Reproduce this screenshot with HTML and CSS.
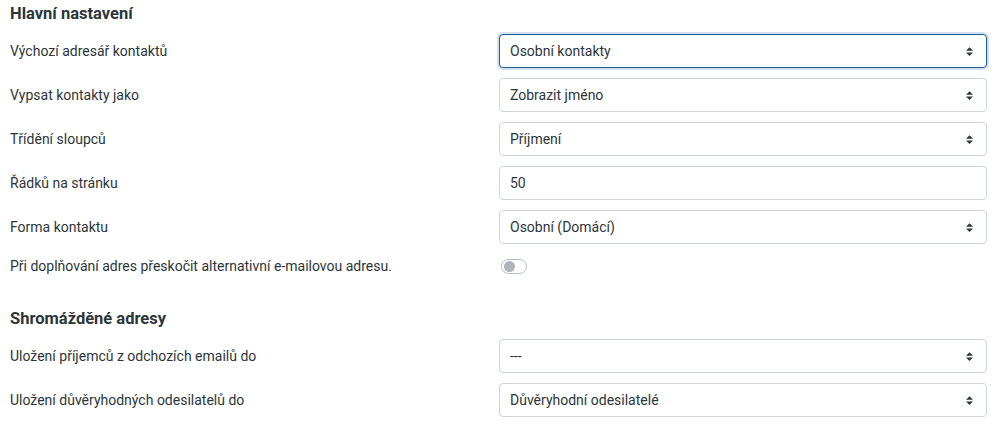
FILE: index.html
```html
<!DOCTYPE html>
<html lang="cs">
<head>
<meta charset="utf-8">
<title>Nastavení kontaktů</title>
<link rel="stylesheet" href="styles.css">
</head>
<body>
<div class="page">
  <section class="group">
    <h2 class="legend">Hlavní nastavení</h2>
    <div class="row">
      <div class="label">Výchozí adresář kontaktů</div>
      <div class="select focused"><span>Osobní kontakty</span><svg class="arrow" viewBox="0 0 4 5" width="7" height="9"><path d="M2 0L0 2h4zm0 5L0 3h4z" fill="#2c363a"/></svg></div>
    </div>
    <div class="row">
      <div class="label">Vypsat kontakty jako</div>
      <div class="select"><span>Zobrazit jméno</span><svg class="arrow" viewBox="0 0 4 5" width="7" height="9"><path d="M2 0L0 2h4zm0 5L0 3h4z" fill="#2c363a"/></svg></div>
    </div>
    <div class="row">
      <div class="label">Třídění sloupců</div>
      <div class="select"><span>Příjmení</span><svg class="arrow" viewBox="0 0 4 5" width="7" height="9"><path d="M2 0L0 2h4zm0 5L0 3h4z" fill="#2c363a"/></svg></div>
    </div>
    <div class="row">
      <div class="label">Řádků na stránku</div>
      <div class="select input"><span>50</span></div>
    </div>
    <div class="row">
      <div class="label">Forma kontaktu</div>
      <div class="select"><span>Osobní (Domácí)</span><svg class="arrow" viewBox="0 0 4 5" width="7" height="9"><path d="M2 0L0 2h4zm0 5L0 3h4z" fill="#2c363a"/></svg></div>
    </div>
    <div class="row row-switch">
      <div class="label">Při doplňování adres přeskočit alternativní e-mailovou adresu.</div>
      <div class="switch-cell"><span class="switch"><span class="knob"></span></span></div>
    </div>
  </section>
  <section class="group group-second">
    <h2 class="legend">Shromážděné adresy</h2>
    <div class="row">
      <div class="label">Uložení příjemců z odchozích emailů do</div>
      <div class="select"><span>---</span><svg class="arrow" viewBox="0 0 4 5" width="7" height="9"><path d="M2 0L0 2h4zm0 5L0 3h4z" fill="#2c363a"/></svg></div>
    </div>
    <div class="row">
      <div class="label">Uložení důvěryhodných odesilatelů do</div>
      <div class="select"><span>Důvěryhodní odesilatelé</span><svg class="arrow" viewBox="0 0 4 5" width="7" height="9"><path d="M2 0L0 2h4zm0 5L0 3h4z" fill="#2c363a"/></svg></div>
    </div>
  </section>
</div>
</body>
</html>
```
FILE: styles.css
```css
html, body {
  margin: 0;
  padding: 0;
  background: #ffffff;
}
body {
  font-family: Roboto, "Liberation Sans", sans-serif;
  font-size: 14px;
  color: #2c363a;
}
.page {
  padding: 0 12px 0 10px;
}
.group-second {
  margin-top: 27px;
}
.legend {
  margin: 4px 0 5px 0;
  font-size: 16.5px;
  line-height: 20px;
  font-weight: bold;
  color: #2c363a;
}
.row {
  display: grid;
  grid-template-columns: 489px 1fr;
  align-items: center;
  padding: 5px 0;
}
.row-switch {
  padding-top: 7px;
}
.label {
  line-height: 21px;
}
.select {
  box-sizing: border-box;
  height: 34px;
  border: 1px solid #cfd5da;
  border-radius: 4px;
  display: flex;
  align-items: center;
  justify-content: space-between;
  padding: 0 13px 0 10px;
  line-height: 21px;
  background: #fff;
}
.select.focused {
  border-color: #1f5e94;
  box-shadow: 0 0 0 2px #d3e1ee;
}
.arrow {
  display: block;
}
.switch-cell {
  height: 21px;
  display: flex;
  align-items: center;
  padding-left: 2px;
}
.switch {
  box-sizing: border-box;
  width: 26px;
  height: 15px;
  border: 1px solid #b4bbc1;
  border-radius: 8px;
  display: flex;
  align-items: center;
  padding-left: 2px;
}
.knob {
  width: 11px;
  height: 11px;
  border-radius: 50%;
  background: #adb5bd;
}
```
